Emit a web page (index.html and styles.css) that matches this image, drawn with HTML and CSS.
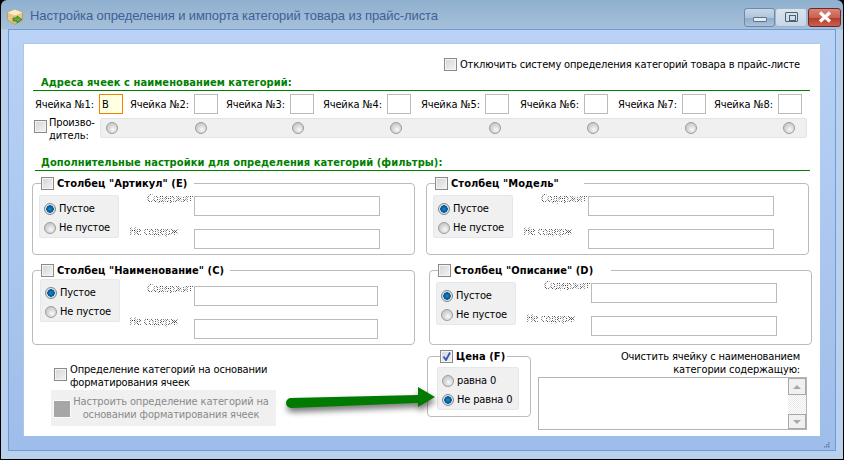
FILE: index.html
```html
<!DOCTYPE html>
<html lang="en">
<head>
    <meta charset="UTF-8">
    <title>Настройка категорий</title>
    <link rel="stylesheet" href="styles.css">
</head>
<body>
    <div class="window">
        <div class="titlebar">
            <svg class="app-icon" width="16" height="16" viewBox="0 0 16 16">
                <path d="M8 0.500 15.500 3.500V11L8 15.500 0.500 11V3.500Z" fill="#e6c683" stroke="#b89a5c" stroke-width="0.8"/>
                <path d="M0.500 3.500 8 6.500 15.500 3.500 8 0.500Z" fill="#f8ebc8"/>
                <path d="M8 6.500V15" stroke="#c9a86a" stroke-width="0.8"/>
                <path d="M6 9H10V7L15 10.500 10 14V12H6Z" fill="#62ad3e" stroke="#2f7a22" stroke-width="0.8"/>
            </svg>
            <span class="title">Настройка определения и импорта категорий товара из прайс-листа</span>
            <div class="win-buttons">
                <span class="win-btn"><i class="min-glyph"></i></span>
                <span class="win-btn win-max"><i class="max-glyph"></i></span>
                <span class="win-btn win-close">
                    <svg width="16" height="12" viewBox="0 0 16 12"><path d="M3 1.500 13 10.500M13 1.500 3 10.500" stroke="#fff" stroke-width="3.200"/></svg>
                </span>
            </div>
        </div>
        <div class="frame">
            <div class="client">
                <label class="disable-row"><input type="checkbox"> Отключить систему определения категорий товара в прайс-листе</label>

                <div class="section-head">Адреса ячеек с наименованием категорий:</div>
                <div class="cells">
                    <div class="cell"><label>Ячейка №1:</label><input class="active" type="text" value="B"></div>
                    <div class="cell"><label>Ячейка №2:</label><input type="text"></div>
                    <div class="cell"><label>Ячейка №3:</label><input type="text"></div>
                    <div class="cell"><label>Ячейка №4:</label><input type="text"></div>
                    <div class="cell"><label>Ячейка №5:</label><input type="text"></div>
                    <div class="cell"><label>Ячейка №6:</label><input type="text"></div>
                    <div class="cell"><label>Ячейка №7:</label><input type="text"></div>
                    <div class="cell"><label>Ячейка №8:</label><input type="text"></div>
                </div>
                <div class="maker-row">
                    <input type="checkbox">
                    <span class="maker-label">Произво-<br>дитель:</span>
                    <div class="maker-radios">
                        <input type="radio" name="mk"><input type="radio" name="mk"><input type="radio" name="mk"><input type="radio" name="mk">
                        <input type="radio" name="mk"><input type="radio" name="mk"><input type="radio" name="mk"><input type="radio" name="mk">
                    </div>
                </div>

                <div class="section-head head-filters">Дополнительные настройки для определения категорий (фильтры):</div>
                <div class="groups">
                    <fieldset class="group group-art">
                        <legend><input type="checkbox"> Столбец "Артикул" (E)</legend>
                        <div class="radio-panel">
                            <label><input type="radio" name="g1" checked> Пустое</label>
                            <label><input type="radio" name="g1"> Не пустое</label>
                        </div>
                        <div class="filters">
                            <span class="dots">Содержит</span><input type="text">
                            <span class="dots dots-out">Не содерж</span><input type="text">
                        </div>
                    </fieldset>
                    <fieldset class="group group-model">
                        <legend><input type="checkbox"> Столбец "Модель"</legend>
                        <div class="radio-panel">
                            <label><input type="radio" name="g2" checked> Пустое</label>
                            <label><input type="radio" name="g2"> Не пустое</label>
                        </div>
                        <div class="filters">
                            <span class="dots">Содержит</span><input type="text">
                            <span class="dots dots-out">Не содерж</span><input type="text">
                        </div>
                    </fieldset>
                    <fieldset class="group group-name">
                        <legend><input type="checkbox"> Столбец "Наименование" (C)</legend>
                        <div class="radio-panel">
                            <label><input type="radio" name="g3" checked> Пустое</label>
                            <label><input type="radio" name="g3"> Не пустое</label>
                        </div>
                        <div class="filters">
                            <span class="dots">Содержит</span><input type="text">
                            <span class="dots dots-out">Не содерж</span><input type="text">
                        </div>
                    </fieldset>
                    <fieldset class="group group-desc">
                        <legend><input type="checkbox"> Столбец "Описание" (D)</legend>
                        <div class="radio-panel">
                            <label><input type="radio" name="g4" checked> Пустое</label>
                            <label><input type="radio" name="g4"> Не пустое</label>
                        </div>
                        <div class="filters">
                            <span class="dots">Содержит</span><input type="text">
                            <span class="dots dots-out">Не содерж</span><input type="text">
                        </div>
                    </fieldset>
                </div>

                <div class="bottom">
                    <div class="format-col">
                        <label class="format-check"><input type="checkbox"><span>Определение категорий на основании<br>форматирования ячеек</span></label>
                        <div class="format-btn">
                            <i class="btn-square"></i>
                            <span>Настроить определение категорий на<br>основании форматирования ячеек</span>
                        </div>
                    </div>
                    <fieldset class="group group-price">
                        <legend><input type="checkbox" checked> Цена (F)</legend>
                        <div class="radio-panel">
                            <label><input type="radio" name="g5"> равна 0</label>
                            <label><input type="radio" name="g5" checked> Не равна 0</label>
                        </div>
                    </fieldset>
                    <div class="clear-col">
                        <div class="clear-label">Очистить ячейку с наименованием<br>категории содержащую:</div>
                        <div class="memo">
                            <div class="scroll">
                                <span class="scroll-btn"><i class="arrow-up"></i></span>
                                <span class="scroll-track"></span>
                                <span class="scroll-btn"><i class="arrow-down"></i></span>
                            </div>
                        </div>
                    </div>
                </div>
            </div>
            <svg class="grip" width="6" height="6" viewBox="0 0 6 6">
                <path d="M4 0h1.500v1.500H4zM2 2h1.500v1.500H2zM4 2h1.500v1.500H4zM0 4h1.500v1.500H0zM2 4h1.500v1.500H2zM4 4h1.500v1.500H4z" fill="#6a86a8"/>
            </svg>
        </div>
        <svg class="big-arrow" width="170" height="45" viewBox="0 0 170 45">
            <defs>
                <filter id="soft" x="-10%" y="-60%" width="120%" height="220%">
                    <feGaussianBlur stdDeviation="3"/>
                </filter>
            </defs>
            <path d="M12 18 139 15V7L156 17 139 27V23L12 28A5 5 0 0 1 12 18Z" fill="#000" opacity="0.55" transform="translate(1 4)" filter="url(#soft)"/>
            <path d="M12 18 139 15V7L156 17 139 27V23L12 28A5 5 0 0 1 12 18Z" fill="#007a00"/>
        </svg>
    </div>
</body>
</html>
```

FILE: styles.css
```css
* {
    box-sizing: border-box;
}
html, body {
    margin: 0;
    height: 100%;
}
body {
    background: #000;
    font-family: "DejaVu Sans Condensed", "DejaVu Sans", sans-serif;
    font-size: 11px;
    letter-spacing: -0.15px;
    color: #000;
    overflow: hidden;
}
.window {
    position: relative;
    width: 842px;
    height: 459px;
    margin-left: 1px;
    border-radius: 6px 6px 0 0;
    background: linear-gradient(180deg, #8fb0cf 0, #a6c0da 29px, #b9d1ec 30px, #b9d1ec 100%);
    overflow: hidden;
}
.titlebar {
    height: 29px;
    display: flex;
    align-items: center;
    padding: 2px 2px 0 6px;
}
.app-icon {
    margin-top: 3px;
    margin-right: 7px;
}
.title {
    font-family: "Liberation Sans", sans-serif;
    font-size: 13px;
    letter-spacing: -0.1px;
    color: #3f5f96;
}
.win-buttons {
    display: flex;
    margin-left: auto;
    margin-top: 3px;
}
.win-btn {
    width: 31px;
    height: 19px;
    display: flex;
    align-items: center;
    justify-content: center;
    border: 1px solid #6f89a6;
    border-radius: 3px;
    background: linear-gradient(180deg, #c7d8ea 0, #afc5dc 50%, #8fabc8 51%, #a9c2dc 100%);
}
.win-max {
    width: 32px;
    background: linear-gradient(180deg, #d8e4ef 0, #c6d7e7 100%);
    border-color: #9fb4c9;
}
.win-close {
    width: 33px;
    margin-left: 1px;
    border-color: #6e2a22;
    background: linear-gradient(180deg, #d9857a 0, #c9604f 50%, #b23a2a 51%, #c9614e 100%);
}
.min-glyph {
    width: 14px;
    height: 5px;
    margin-top: 5px;
    background: #e3ebf3;
    border: 1px solid #5f7488;
    border-radius: 1px;
}
.max-glyph {
    width: 13px;
    height: 10px;
    border: 1px solid #4f6070;
    border-radius: 1px;
    position: relative;
}
.max-glyph::after {
    content: "";
    position: absolute;
    left: 3px;
    top: 2px;
    width: 5px;
    height: 4px;
    border: 1px solid #4f6070;
}
.frame {
    position: relative;
    height: 422px;
    margin: 0 7px;
    padding: 14px 15px 14px 15px;
    border: 1px solid #6c9bd6;
    background: linear-gradient(180deg, #b9d2f5 0, #9fbdea 100%);
}
.grip {
    position: absolute;
    right: 5px;
    bottom: 2px;
}
.client {
    width: 796px;
    height: 392px;
    padding-top: 14px;
    background: #fff;
    box-shadow: -1px -1px 0 #a8c8ee;
}

/* checkboxes and radios drawn like the old windows theme */
input[type="checkbox"] {
    appearance: none;
    width: 13px;
    height: 13px;
    margin: 0;
    flex: none;
    border: 1px solid #8a8a8a;
    background: linear-gradient(135deg, #d4d4d4 0, #f4f4f4 100%);
    box-shadow: inset 0 0 0 1px #f4f4f4;
}
input[type="checkbox"]:checked {
    background: url("data:image/svg+xml,%3Csvg xmlns='http://www.w3.org/2000/svg' width='11' height='11'%3E%3Cpath d='M2.500 5.500 5 9 9 1.500' fill='none' stroke='%233a55a8' stroke-width='1.800'/%3E%3C/svg%3E") center no-repeat, linear-gradient(135deg, #d6d6e4 0, #f2f2f2 100%);
}
input[type="radio"] {
    appearance: none;
    width: 12px;
    height: 12px;
    margin: 0;
    flex: none;
    border: 1px solid #9c9c9c;
    border-radius: 50%;
    background: radial-gradient(circle at 60% 65%, #fafafa 0, #d8d8d8 45%, #bdbdbd 100%);
}
input[type="radio"]:checked {
    border-color: #7b8794;
    background: radial-gradient(circle at 50% 50%, #0f8fd8 0, #0a5f9e 2.500px, #075a92 3.500px, #e6e6e6 4px, #d4d4d4 100%);
}
input[type="text"] {
    height: 20px;
    margin: 0;
    padding: 0 2px;
    border: 1px solid #bbb;
    background: #fff;
    font: inherit;
    color: #000;
}

.disable-row {
    display: flex;
    justify-content: flex-end;
    align-items: center;
    gap: 3px;
    height: 13px;
    padding-right: 20px;
}
.section-head {
    height: 15px;
    margin: 5px 10px 0 9px;
    padding-left: 8px;
    border-bottom: 1px solid #008000;
    color: #008000;
    font-weight: bold;
    letter-spacing: 0.07px;
    line-height: 13px;
}
.cells {
    display: grid;
    grid-template-columns: 95px 96px 97px 98px 99px 98px 96px 88px;
    margin: 3px 0 0 11px;
}
.cell {
    display: flex;
    align-items: center;
}
.cell label {
    width: 64px;
    white-space: nowrap;
}
.cell input {
    width: 24px;
}
.cell input.active {
    border-color: #f08000;
    background: #ffffe1;
}
.maker-row {
    display: flex;
    align-items: flex-start;
    height: 26px;
    margin: 2px 0 0 10px;
}
.maker-row input[type="checkbox"] {
    margin-top: 4px;
}
.maker-label {
    width: 53px;
    padding-left: 2px;
    line-height: 13px;
}
.maker-radios {
    display: grid;
    grid-template-columns: 89px 97px 98px 99px 98px 98px 98px 12px;
    align-items: center;
    width: 707px;
    height: 20px;
    margin-top: 2px;
    padding-left: 5px;
    border: 1px solid #e0e4e8;
    border-radius: 2px;
    background: #f0f0f0;
}
.head-filters {
    margin: 14px 10px 0 11px;
    padding-left: 6px;
}

/* filter groups */
.groups {
    display: grid;
    grid-template-columns: 394px 385px;
    margin: 6px 0 0 8px;
}
.group {
    display: flex;
    align-items: flex-start;
    height: 78px;
    width: 383px;
    min-width: 0;
    margin: 0;
    padding: 0;
    border: 1px solid #bbb;
    border-radius: 4px;
}
.group legend {
    display: flex;
    align-items: center;
    gap: 3px;
    height: 13px;
    margin-left: 8px;
    padding: 0 7px 0 0;
    font-weight: bold;
    letter-spacing: 0.07px;
    white-space: nowrap;
}
.group-model legend {
    padding-right: 25px;
}
.group-name legend {
    padding-right: 6px;
}
.group-desc legend {
    padding-right: 18px;
}
.group-name, .group-desc {
    height: 81px;
    margin-top: 9px;
}
.group-desc {
    margin-left: 3px;
}
.radio-panel {
    display: flex;
    flex-direction: column;
    flex: none;
    width: 80px;
    height: 43px;
    margin: 5px 0 0 6px;
    padding-top: 3px;
    border: 1px solid #e4e8ec;
    border-radius: 2px;
    background: #f0f0f0;
}
.group-name .radio-panel {
    margin: 2px 0 0 7px;
}
.radio-panel label {
    display: flex;
    align-items: center;
    gap: 3px;
    height: 19px;
    padding-left: 4px;
    white-space: nowrap;
}
.filters {
    display: grid;
    grid-template-columns: 75px 186px;
    row-gap: 13px;
    margin-top: 6px;
}
.group-name .filters {
    grid-template-columns: 74px 184px;
    margin-top: 9px;
}
.filters input {
    width: 100%;
}
/* the labels here are rendered half-dotted in the original dialog */
.dots {
    justify-self: end;
    margin: -2px 1px 0 0;
    height: 10px;
    font-size: 10px;
    line-height: 10px;
    letter-spacing: -0.3px;
    white-space: nowrap;
    color: transparent;
    background: repeating-conic-gradient(#333 0 25%, #fff 0 50%) 0 0 / 2px 2px;
    -webkit-background-clip: text;
    background-clip: text;
}
.dots-out {
    margin-right: 16px;
}

/* bottom row */
.bottom {
    display: flex;
    margin-top: 5px;
}
.format-col {
    width: 403px;
    padding: 13px 0 0 30px;
}
.format-check {
    display: flex;
    gap: 3px;
    align-items: flex-start;
    line-height: 13px;
}
.format-check input {
    margin-top: 5px;
}
.format-btn {
    display: flex;
    align-items: center;
    width: 225px;
    height: 36px;
    margin: 1px 0 0 -3px;
    padding: 0 4px 0 3px;
    background: #f0f0f0;
    color: #8a8a8a;
    text-align: center;
    line-height: 13px;
}
.btn-square {
    flex: none;
    width: 16px;
    height: 16px;
    margin-top: 2px;
    background: #a6a6a6;
    outline: 1px solid #fafafa;
}
.format-btn span {
    flex: 1;
    white-space: nowrap;
}
.group-price {
    width: 104px;
    height: 67px;
    margin: 0 7px 0 0;
}
.group-price legend {
    margin-left: 12px;
    padding-right: 2px;
}
.group-price .radio-panel {
    width: 82px;
    margin: 4px 0 0 9px;
}
.clear-col {
    width: 269px;
}
.clear-label {
    padding-right: 7px;
    text-align: right;
    line-height: 13px;
}
.memo {
    display: flex;
    justify-content: flex-end;
    height: 53px;
    margin-top: 1px;
    border: 1px solid #b5b5b5;
}
.scroll {
    display: flex;
    flex-direction: column;
    width: 18px;
}
.scroll-btn {
    display: flex;
    align-items: center;
    justify-content: center;
    height: 17px;
    border: 1px solid #a8a8a8;
    background: #f0f0f0;
}
.scroll-btn:last-child {
    height: 15px;
}
.scroll-track {
    flex: 1;
    background: repeating-conic-gradient(#e8e8e8 0 25%, #fff 0 50%) 0 0 / 2px 2px;
}
.arrow-up, .arrow-down {
    width: 0;
    height: 0;
    border: 4px solid transparent;
}
.arrow-up {
    border-bottom-color: #a8a8a8;
    border-top-width: 0;
}
.arrow-down {
    border-top-color: #a8a8a8;
    border-bottom-width: 0;
}
.big-arrow {
    position: absolute;
    left: 278px;
    top: 380px;
}
```
